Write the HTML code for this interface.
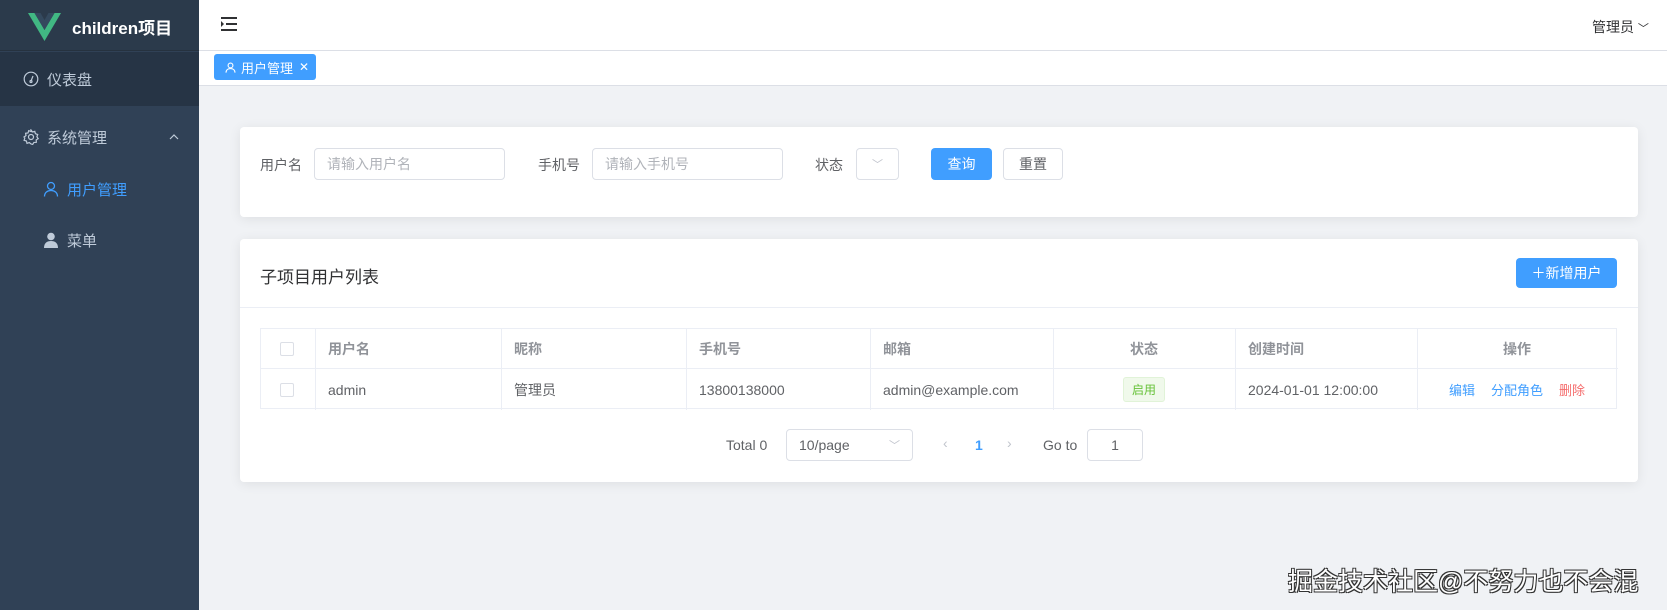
<!DOCTYPE html>
<html><head><meta charset="utf-8"><style>
*{box-sizing:border-box;margin:0;padding:0}
body{width:1667px;height:610px;overflow:hidden;background:#f0f2f5;font-family:"Liberation Sans","Noto Sans CJK SC",sans-serif;font-size:15px;color:#606266;position:relative}
.abs{position:absolute}
.side{left:0;top:0;width:199px;height:610px;background:#304156}
.logo{left:0;top:0;width:199px;height:51px;background:#2b3a4b;border-bottom:1px solid #26323f}
.mi{left:0;width:199px;color:#bfcbd9;font-size:15px;display:flex;align-items:center}
.hdr{left:199px;top:0;width:1468px;height:51px;background:#fff;border-bottom:1px solid #dcdfe6}
.tags{left:199px;top:51px;width:1468px;height:35px;background:#fff;border-bottom:1px solid #dcdfe6}
.card{background:#fff;border-radius:4px;box-shadow:0 2px 12px rgba(0,0,0,.08)}
.inp{border:1px solid #dcdfe6;border-radius:4px;background:#fff;height:32px;display:flex;align-items:center;padding-left:12px;color:#b0b3b9;font-size:14px}
.lbl{font-size:14px;color:#606266}
.btn{border-radius:4px;height:32px;display:flex;align-items:center;justify-content:center;font-size:14px}
.th,.td{position:absolute;display:flex;align-items:center;padding-left:13px;font-size:14px}
.th{color:#909399;font-weight:bold;top:0;height:40px}
.td{color:#606266;top:40px;height:41px}
.vl{position:absolute;top:0;width:1px;height:81px;background:#ebeef5}
.cb{width:14px;height:14px;border:1px solid #dcdfe6;border-radius:2px;background:#fff}
</style></head><body>
<div class="abs side"></div>
<div class="abs logo">
<svg class="abs" style="left:28px;top:13px" width="33" height="28" viewBox="0 0 33 28"><path d="M0 0h6.5l10 17 10-17H33L16.5 28z" fill="#41b883"/><path d="M6.5 0h6l4 7 4-7h6l-10 17z" fill="#34495e"/></svg>
<div class="abs" style="left:72px;top:14px;color:#fff;font-weight:bold;font-size:17px">children项目</div>
</div>
<div class="abs mi" style="top:52px;height:54px;background:#263445">
<svg style="margin-left:23px" width="16" height="16" viewBox="0 0 16 16" fill="none" stroke="#bfcbd9" stroke-width="1.2"><circle cx="8" cy="8" r="6.8"/><path d="M8 10l2-5"/><circle cx="8" cy="10.5" r="1"/></svg>
<span style="margin-left:8px">仪表盘</span></div>
<div class="abs mi" style="top:110px;height:54px">
<svg style="margin-left:23px" width="16" height="16" viewBox="0 0 16 16" fill="none" stroke="#bfcbd9" stroke-width="1.2"><circle cx="8" cy="8" r="2.5"/><path d="M8 1l1.5 2 2.3-.6.6 2.3 2.3.8-.8 2.3 1.3 1.9-2 1.2.1 2.4-2.4.1-1.2 2L8 15l-1.7-1.5-2.3.8-.6-2.3-2.3-.7.7-2.3L1 8l2-1.4-.4-2.3 2.4-.3.7-2.3 2.3.8z"/></svg>
<span style="margin-left:8px">系统管理</span>
<svg style="position:absolute;left:168px" width="12" height="8" viewBox="0 0 12 8" fill="none" stroke="#bfcbd9" stroke-width="1.2"><path d="M2 6l4-4 4 4"/></svg></div>
<div class="abs mi" style="top:163px;height:52px;color:#409eff">
<svg style="margin-left:43px" width="16" height="16" viewBox="0 0 16 16" fill="none" stroke="#409eff" stroke-width="1.3"><circle cx="8" cy="5" r="3.5"/><path d="M1.5 15.5c0-4 3-6 6.5-6s6.5 2 6.5 6"/></svg>
<span style="margin-left:8px">用户管理</span></div>
<div class="abs mi" style="top:214px;height:52px">
<svg style="margin-left:43px" width="16" height="16" viewBox="0 0 16 16" fill="#bfcbd9"><circle cx="8" cy="4.5" r="3.8"/><path d="M1 16c0-5 3-7 7-7s7 2 7 7z"/></svg>
<span style="margin-left:8px">菜单</span></div>

<div class="abs hdr">
<svg class="abs" style="left:22px;top:17px" width="16" height="14" viewBox="0 0 16 14" fill="#303133"><rect x="0" y="0" width="16" height="2"/><rect x="5" y="6" width="11" height="2"/><rect x="0" y="12" width="16" height="2"/><path d="M0 4l3 3-3 3z"/></svg>
<div class="abs" style="left:1393px;top:17px;font-size:14px;color:#303133">管理员 <span style="font-size:11px">﹀</span></div>
</div>
<div class="abs tags">
<div class="abs" style="left:15px;top:3px;width:102px;height:26px;background:#409eff;border-radius:3px;color:#fff;font-size:13px;display:flex;align-items:center;padding-left:11px">
<svg width="11" height="11" viewBox="0 0 16 16" fill="none" stroke="#fff" stroke-width="1.6"><circle cx="8" cy="5" r="3.5"/><path d="M1.5 15.5c0-4 3-6 6.5-6s6.5 2 6.5 6"/></svg>
<span style="margin-left:5px">用户管理</span><span style="margin-left:6px;font-size:12px">✕</span></div>
</div>

<div class="abs card" style="left:240px;top:127px;width:1398px;height:90px">
<div class="abs lbl" style="left:20px;top:28px">用户名</div>
<div class="abs inp" style="left:74px;top:21px;width:191px">请输入用户名</div>
<div class="abs lbl" style="left:298px;top:28px">手机号</div>
<div class="abs inp" style="left:352px;top:21px;width:191px">请输入手机号</div>
<div class="abs lbl" style="left:575px;top:28px">状态</div>
<div class="abs inp" style="left:616px;top:21px;width:43px;color:#c0c4cc;font-size:11px;padding-left:15px">﹀</div>
<div class="abs btn" style="left:691px;top:21px;width:61px;background:#409eff;color:#fff">查询</div>
<div class="abs btn" style="left:763px;top:21px;width:60px;border:1px solid #dcdfe6;color:#606266">重置</div>
</div>

<div class="abs card" style="left:240px;top:239px;width:1398px;height:243px">
<div class="abs" style="left:20px;top:24px;font-size:17px;color:#303133">子项目用户列表</div>
<div class="abs btn" style="left:1276px;top:19px;width:101px;height:30px;background:#409eff;color:#fff;font-size:14px">＋新增用户</div>
<div class="abs" style="left:0;top:68px;width:1398px;height:1px;background:#ebeef5"></div>
<div class="abs" style="left:20px;top:89px;width:1357px;height:81px;border:1px solid #ebeef5">
<div class="abs" style="left:0;top:39px;width:1357px;height:1px;background:#ebeef5"></div>
<div class="vl" style="left:54px"></div><div class="vl" style="left:240px"></div><div class="vl" style="left:425px"></div><div class="vl" style="left:609px"></div><div class="vl" style="left:792px"></div><div class="vl" style="left:974px"></div><div class="vl" style="left:1156px"></div>
<div class="th" style="left:0;padding-left:19px"><div class="cb"></div></div>
<div class="td" style="left:0;padding-left:19px"><div class="cb"></div></div>
<div class="th" style="left:54px">用户名</div><div class="td" style="left:54px">admin</div>
<div class="th" style="left:240px">昵称</div><div class="td" style="left:240px">管理员</div>
<div class="th" style="left:425px">手机号</div><div class="td" style="left:425px">13800138000</div>
<div class="th" style="left:609px">邮箱</div><div class="td" style="left:609px">admin@example.com</div>
<div class="th" style="left:792px;width:182px;justify-content:center;padding:0">状态</div>
<div class="td" style="left:792px;width:182px;justify-content:center;padding:0"><span style="background:#f0f9eb;border:1px solid #e1f3d8;color:#67c23a;font-size:12px;padding:3px 8px;border-radius:3px">启用</span></div>
<div class="th" style="left:974px">创建时间</div><div class="td" style="left:974px">2024-01-01 12:00:00</div>
<div class="th" style="left:1156px;width:200px;justify-content:center;padding:0">操作</div>
<div class="td" style="left:1156px;width:200px;justify-content:center;padding:0;font-size:13px"><span style="color:#409eff">编辑</span><span style="color:#409eff;margin-left:16px">分配角色</span><span style="color:#f56c6c;margin-left:16px">删除</span></div>
</div>
<div class="abs" style="left:486px;top:198px;font-size:14px">Total 0</div>
<div class="abs inp" style="left:546px;top:190px;width:127px;color:#606266;font-size:14px">10/page<span style="position:absolute;right:12px;color:#c0c4cc;font-size:11px">﹀</span></div>
<div class="abs" style="left:703px;top:196px;color:#c0c4cc;font-size:14px">‹</div>
<div class="abs" style="left:735px;top:198px;color:#409eff;font-weight:bold;font-size:14px">1</div>
<div class="abs" style="left:767px;top:196px;color:#c0c4cc;font-size:14px">›</div>
<div class="abs" style="left:803px;top:198px;font-size:14px">Go to</div>
<div class="abs inp" style="left:847px;top:190px;width:56px;justify-content:center;padding:0;color:#606266">1</div>
</div>
<div class="abs" style="left:1288px;top:562px;font-size:25px;color:#fff;text-shadow:1px 1px 0 #333,-1px -1px 0 #333,1px -1px 0 #333,-1px 1px 0 #333;white-space:nowrap">掘金技术社区@不努力也不会混</div>
</body></html>
